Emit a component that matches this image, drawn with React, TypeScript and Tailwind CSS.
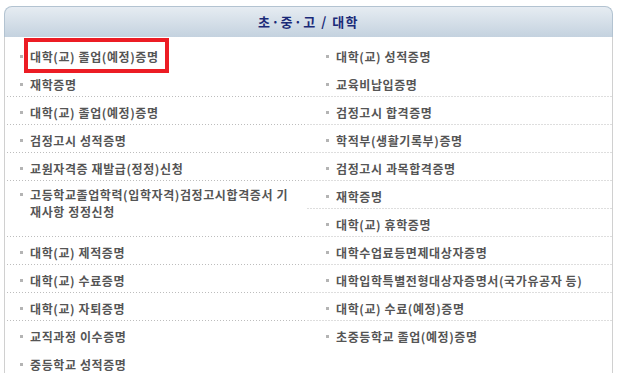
import React from 'react';

interface Item {
  text: React.ReactNode;
  h: number;
  line: boolean;
  multi?: boolean;
}

const leftItems: Item[] = [
  { text: '대학(교) 졸업(예정)증명', h: 28, line: false },
  { text: '재학증명', h: 28, line: true },
  { text: '대학(교) 졸업(예정)증명', h: 28, line: true },
  { text: '검정고시 성적증명', h: 28, line: true },
  { text: '교원자격증 재발급(정정)신청', h: 28, line: true },
  {
    text: (
      <>
        고등학교졸업학력(입학자격)검정고시합격증서 기
        <br />
        재사항 정정신청
      </>
    ),
    h: 56,
    line: true,
    multi: true,
  },
  { text: '대학(교) 제적증명', h: 28, line: true },
  { text: '대학(교) 수료증명', h: 28, line: true },
  { text: '대학(교) 자퇴증명', h: 28, line: true },
  { text: '교직과정 이수증명', h: 28, line: false },
  { text: '중등학교 성적증명', h: 28, line: false },
];

const rightItems: Item[] = [
  { text: '대학(교) 성적증명', h: 28, line: false },
  { text: '교육비납입증명', h: 28, line: true },
  { text: '검정고시 합격증명', h: 28, line: true },
  { text: '학적부(생활기록부)증명', h: 28, line: true },
  { text: '검정고시 과목합격증명', h: 28, line: true },
  { text: '재학증명', h: 28, line: true },
  { text: '대학(교) 휴학증명', h: 28, line: true },
  { text: '대학수업료등면제대상자증명', h: 28, line: true },
  { text: '대학입학특별전형대상자증명서(국가유공자 등)', h: 28, line: true },
  { text: '대학(교) 수료(예정)증명', h: 28, line: true },
  { text: '초중등학교 졸업(예정)증명', h: 28, line: false },
];

function Row({ item, pad }: { item: Item; pad: string }) {
  return (
    <li
      className={`flex ${item.multi ? 'items-start pt-[5px]' : 'items-center pt-[2px]'} ${pad} ${
        item.line
          ? 'bg-[linear-gradient(to_right,#bdbdbd_1px,transparent_1px)] bg-[length:3px_1px] bg-repeat-x bg-bottom'
          : ''
      }`}
      style={{ height: item.h }}
    >
      <span className={`w-[3px] h-[3px] bg-[#b4b4b4] shrink-0 mr-[7px] ${item.multi ? 'mt-[7px]' : ''}`} />
      <span className="text-[12px] leading-[17px] font-bold text-[#555555] whitespace-nowrap tracking-[0.6px]">
        {item.text}
      </span>
    </li>
  );
}

export default function App() {
  return (
    <div
      className="relative w-[618px] h-[373px] overflow-hidden bg-white"
      style={{ fontFamily: '"Noto Sans CJK KR", "Noto Sans", sans-serif' }}
    >
      <div className="ml-[4px] mt-[6px] w-[609px]">
        {/* header */}
        <div className="h-[31px] rounded-t-[8px] border border-b-0 border-[#b3c3d1] bg-[linear-gradient(to_bottom,#e6ecf2,#c4d2df)] flex items-center justify-center">
          <span className="text-[13px] font-bold text-[#1a2a78] tracking-[1.5px]">초·중·고 / 대학</span>
        </div>

        {/* list */}
        <div className="flex border-x border-[#d0d0d0] pt-[4px] h-[400px]">
          <ul className="w-[301px]">
            {leftItems.map((item, i) => (
              <Row key={i} item={item} pad="pl-[15px]" />
            ))}
          </ul>
          <ul className="flex-1">
            {rightItems.map((item, i) => (
              <Row key={i} item={item} pad="pl-[20px]" />
            ))}
          </ul>
        </div>
      </div>

      {/* highlight box */}
      <div className="absolute left-[24px] top-[38px] w-[145px] h-[35px] border-4 border-[#ec1c24]" />
    </div>
  );
}
